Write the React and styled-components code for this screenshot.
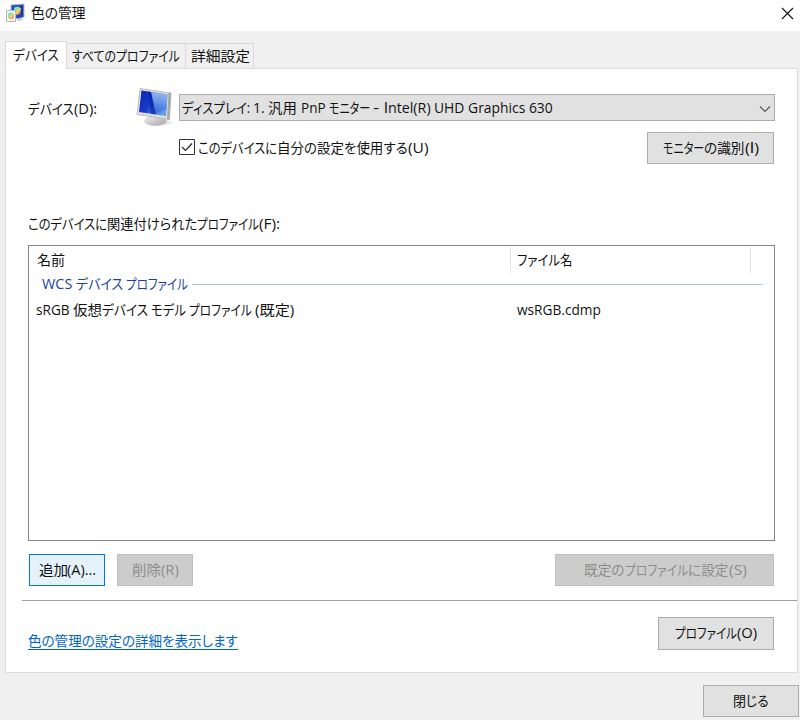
import React, { useLayoutEffect, useRef, useState } from "react";
import styled, { createGlobalStyle } from "styled-components";

const GlobalStyle = createGlobalStyle`
  * { box-sizing: border-box; }
  body { margin: 0; background: #f0f0f0; }
`;

const Window = styled.div`
  width: 800px;
  height: 720px;
  display: flex;
  flex-direction: column;
  overflow: hidden;
  background: #f0f0f0;
  color: #111;
  font: 14px/20px "Open Sans", "Noto Sans CJK JP", sans-serif;
  font-feature-settings: "palt";
`;

const TitleBar = styled.header`
  height: 31px;
  flex: none;
  display: flex;
  align-items: flex-start;
  padding: 3px 6px 0 5px;
  background: #fff;
`;
const TitleText = styled.div`
  flex: 1;
  padding-left: 6px;
`;
const CloseIcon = styled.svg`
  margin-top: 4px;
`;

const TabStrip = styled.nav`
  display: flex;
  align-items: flex-end;
  height: 37px;
  flex: none;
  padding-left: 5px;
`;
const Tab = styled.div`
  display: flex;
  align-items: flex-start;
  width: ${(p) => p.$width}px;
  height: ${(p) => (p.$active ? 28 : 25)}px;
  margin-bottom: ${(p) => (p.$active ? -1 : 0)}px;
  padding: ${(p) => (p.$active ? "3px 0 0 7px" : "2px 0 0 5px")};
  border: 1px solid #dadada;
  border-bottom: 0;
  border-left-width: ${(p) => (p.$active ? 1 : 0)}px;
  background: ${(p) => (p.$active ? "#fff" : "#f0f0f0")};
  z-index: ${(p) => (p.$active ? 1 : 0)};
`;

const Panel = styled.main`
  display: flex;
  flex-direction: column;
  width: 793px;
  height: 605px;
  flex: none;
  margin-left: 5px;
  padding: 19px 0 0 22px;
  border: 1px solid #dcdcdc;
  background: #fff;
`;

const DeviceRow = styled.div`
  display: flex;
  height: 42px;
`;
const DeviceLabel = styled.div`
  width: 106px;
  padding-top: 11px;
`;
const MonitorIcon = styled.svg`
  flex: none;
  margin-right: 5px;
`;
const Select = styled.div`
  display: flex;
  justify-content: space-between;
  width: 596px;
  height: 27px;
  margin-top: 6px;
  padding: 3px 3px 0 2px;
  border: 1px solid #adadad;
  background: #e1e1e1;
`;
const Chevron = styled.svg`
  margin-top: 5px;
`;

const OptionRow = styled.div`
  display: flex;
  justify-content: space-between;
  height: 84px;
  padding: 2px 23px 0 151px;
`;
const CheckLabel = styled.div`
  display: flex;
  gap: 3px;
  padding-top: 6px;
`;
const CheckBox = styled.svg`
  flex: none;
  margin-top: 1px;
`;

const Button = styled.button`
  display: flex;
  justify-content: center;
  align-items: flex-start;
  flex: none;
  width: ${(p) => p.$width}px;
  height: ${(p) => p.$height || 32}px;
  padding: 5px 0 0;
  border: 1px solid ${(p) => (p.$focus ? "#0078d7" : p.disabled ? "#bfbfbf" : "#adadad")};
  background: ${(p) => (p.$focus ? "#e5f1fb" : p.disabled ? "#cccccc" : "#e1e1e1")};
  color: ${(p) => (p.disabled ? "#8c8c8c" : "#111")};
  font: inherit;
  font-feature-settings: inherit;
`;

const ListCaption = styled.div`
  height: 31px;
`;
const ListView = styled.section`
  width: 747px;
  height: 296px;
  flex: none;
  border: 1px solid #828790;
`;
const HeaderRow = styled.div`
  display: flex;
  height: 27px;
  padding-top: 1px;
`;
const HeaderCell = styled.div`
  width: ${(p) => p.$width}px;
  height: 26px;
  padding: 3px 0 0 ${(p) => p.$inset}px;
  border-right: 1px solid #e5e5e5;
`;
const GroupRow = styled.div`
  display: flex;
  gap: 4px;
  height: 23px;
  padding: 1px 11px 0 13px;
  color: #1b3f9c;
`;
const GroupLine = styled.div`
  flex: 1;
  height: 1px;
  margin-top: 10px;
  background: #b5c6e3;
`;
const ItemRow = styled.div`
  display: flex;
  padding: 4px 0 0 7px;
`;
const NameCell = styled.div`
  width: 481px;
`;

const Actions = styled.div`
  display: flex;
  gap: 12px;
  height: 46px;
  flex: none;
  padding: 13px 0 0 1px;
`;
const Spacer = styled.div`
  width: 338px;
`;
const Divider = styled.div`
  height: 1px;
  flex: none;
  margin: 13px 0 16px -6px;
  background: #a0a0a0;
`;
const PanelFooter = styled.div`
  display: flex;
  justify-content: space-between;
  padding-right: 23px;
`;
const Link = styled.a`
  height: 18px;
  margin-top: 15px;
  line-height: 18px;
  border-bottom: 1px solid #0066cc;
  color: #0066cc;
`;
const WindowFooter = styled.footer`
  display: flex;
  justify-content: flex-end;
  padding: 12px 1px 0 0;
`;

const PlainCapital = styled.span`
  font-family: Roboto, sans-serif;
`;

const FitBox = styled.span`
  display: inline-block;
  vertical-align: top;
  width: ${(p) => p.$width}px;
  white-space: pre;
`;
const FitInner = styled.span`
  display: inline-block;
  transform-origin: 0 0;
`;

/* A run of text condensed or widened to an exact advance width. */
function Fit({ w, children }) {
  const ref = useRef(null);
  const [scale, setScale] = useState(1);
  useLayoutEffect(() => {
    setScale(w / ref.current.offsetWidth);
  }, [w]);
  return (
    <FitBox $width={w}>
      <FitInner ref={ref} style={{ transform: `scaleX(${scale})` }}>{children}</FitInner>
    </FitBox>
  );
}

function Runs({ items }) {
  return <div>{items.map(([text, w], i) => <Fit key={i} w={w}>{text}</Fit>)}</div>;
}

function ColorIcon() {
  return (
    <svg width="20" height="20" viewBox="0 0 20 20">
      <defs>
        <linearGradient id="hue" x1="0" y1="0" x2="1" y2="1">
          <stop offset="0" stopColor="#45d4ff" />
          <stop offset=".35" stopColor="#8de89c" />
          <stop offset=".6" stopColor="#ffc45a" />
          <stop offset="1" stopColor="#e44bc0" />
        </linearGradient>
      </defs>
      <path d="M6 2 19 1v13l-6 2-7-2z" fill="#2449bd" stroke="#b4b9c9" />
      <path d="m9 4.500 4-1 3 2-1 5-3 1.500-3-2z" fill="url(#hue)" />
      <path d="m16 2 2 0v11l-2 1z" fill="#263a8b" />
      <path d="m12 16 5-1 1 2-5 1z" fill="#c9ccd2" />
      <path d="M1.500 7.500h7l2 2v9h-9z" fill="#f8fafc" stroke="#b2b7be" />
      <ellipse cx="6" cy="12.800" rx="3.200" ry="3.500" fill="url(#hue)" />
    </svg>
  );
}

function Monitor() {
  return (
    <MonitorIcon width="40" height="40" viewBox="0 0 40 40">
      <defs>
        <linearGradient id="screen" x1="0" y1="0" x2="1" y2="0.700">
          <stop offset="0" stopColor="#0826b3" />
          <stop offset=".5" stopColor="#153bc9" />
          <stop offset="1" stopColor="#6ba2e8" />
        </linearGradient>
        <linearGradient id="sheen" x1="0" y1="0" x2="0" y2="1">
          <stop offset="0" stopColor="#b5d8fa" />
          <stop offset="1" stopColor="#3165da" />
        </linearGradient>
        <linearGradient id="metal" x1="0" y1="0" x2="1" y2="1">
          <stop offset="0" stopColor="#f2f2f2" />
          <stop offset="1" stopColor="#a2a2a2" />
        </linearGradient>
      </defs>
      <ellipse cx="25" cy="34.500" rx="13" ry="3" fill="#e7e7e7" />
      <path d="M16 27h11l1 7H16z" fill="#bfc2c5" />
      <ellipse cx="21.500" cy="33" rx="11" ry="4.700" fill="url(#metal)" stroke="#c4c4c4" strokeWidth=".6" />
      <path d="M6 .5 37 5 35.500 31.500 3 26.500z" fill="#dedede" stroke="#aaa" strokeWidth=".7" />
      <path d="M34.500 4.700 37 5l-1.500 26.500-2.500-.5z" fill="#a8a8a8" />
      <path d="M7.500 2.500 33.500 6.500 32 28 5 24z" fill="url(#screen)" />
      <path d="M17 4 33.500 6.500 32.500 21 21 25z" fill="url(#sheen)" opacity=".8" />
      <path d="m14 3.500 3 .5 5 22.400-5-.7z" fill="#0620a8" opacity=".65" />
    </MonitorIcon>
  );
}

export default function App() {
  return (
    <>
      <GlobalStyle />
      <Window>
        <TitleBar>
          <ColorIcon />
          <TitleText><Fit w={55}>色の管理</Fit></TitleText>
          <CloseIcon width="13" height="13" viewBox="0 0 13 13">
            <path d="m1 1 11 11M12 1 1 12" stroke="#111" strokeWidth="1.100" />
          </CloseIcon>
        </TitleBar>
        <TabStrip>
          <Tab $active $width={62}><Fit w={46}>デバイス</Fit></Tab>
          <Tab $width={119}><Fit w={108}>すべてのプロファイル</Fit></Tab>
          <Tab $width={68}><Fit w={59}>詳細設定</Fit></Tab>
        </TabStrip>
        <Panel>
          <DeviceRow>
            <DeviceLabel><Runs items={[["デバイス", 46], ["(D):", 23]]} /></DeviceLabel>
            <Monitor />
            <Select>
              <Runs items={[["ディスプレイ: ", 71], ["1. ", 15], ["汎用 ", 33], ["PnP ", 28], ["モニター ", 44], ["- ", 11], [<><PlainCapital>I</PlainCapital>ntel(R) </>, 50], ["UHD Graphics 630", 119]]} />
              <Chevron width="12" height="12" viewBox="0 0 12 12">
                <path d="m1 3.500 5 5 5-5" fill="none" stroke="#555" strokeWidth="1.100" />
              </Chevron>
            </Select>
          </DeviceRow>
          <OptionRow>
            <CheckLabel>
              <CheckBox width="16" height="16" viewBox="0 0 16 16">
                <path d="M.5.5h15v15H.5z" fill="#fff" stroke="#333" />
                <path d="m3 8 3.500 3.500L13 4.500" fill="none" stroke="#222" strokeWidth="1.200" />
              </CheckBox>
              <Runs items={[["このデバイスに", 79], ["自分の設定を使用する", 131], ["(U)", 20]]} />
            </CheckLabel>
            <Button $width={127}><Runs items={[["モニター", 41], ["の識別", 41], [<>(<PlainCapital>I</PlainCapital>)</>, 14]]} /></Button>
          </OptionRow>
          <ListCaption>
            <Runs items={[["このデバイスに", 79], ["関連付けられた", 90], ["プロファイル", 62], ["(F):", 21]]} />
          </ListCaption>
          <ListView>
            <HeaderRow>
              <HeaderCell $width={482} $inset={8}><Fit w={28}>名前</Fit></HeaderCell>
              <HeaderCell $width={240} $inset={6}><Fit w={55}>ファイル名</Fit></HeaderCell>
            </HeaderRow>
            <GroupRow>
              <Runs items={[["WCS ", 34], ["デバイス ", 50], ["プロファイル", 62]]} />
              <GroupLine />
            </GroupRow>
            <ItemRow>
              <NameCell>
                <Runs items={[["sRGB ", 37], ["仮想", 29], ["デバイス ", 49], ["モデル ", 38], ["プロファイル ", 66], ["(既定)", 39]]} />
              </NameCell>
              <Fit w={84}>wsRGB.cdmp</Fit>
            </ItemRow>
          </ListView>
          <Actions>
            <Button $width={76} $focus><Runs items={[["追加", 29], ["(A)...", 29]]} /></Button>
            <Button $width={76} disabled><Runs items={[["削除", 29], ["(R)", 18]]} /></Button>
            <Spacer />
            <Button $width={219} disabled><Runs items={[["既定の", 41], ["プロファイル", 63], ["に設定", 40], ["(S)", 18]]} /></Button>
          </Actions>
          <Divider />
          <PanelFooter>
            <Link><Fit w={210}>色の管理の設定の詳細を表示します</Fit></Link>
            <Button $width={116} $height={33}><Runs items={[["プロファイル", 62], ["(O)", 20]]} /></Button>
          </PanelFooter>
        </Panel>
        <WindowFooter>
          <Button $width={96}><Fit w={36}>閉じる</Fit></Button>
        </WindowFooter>
      </Window>
    </>
  );
}
